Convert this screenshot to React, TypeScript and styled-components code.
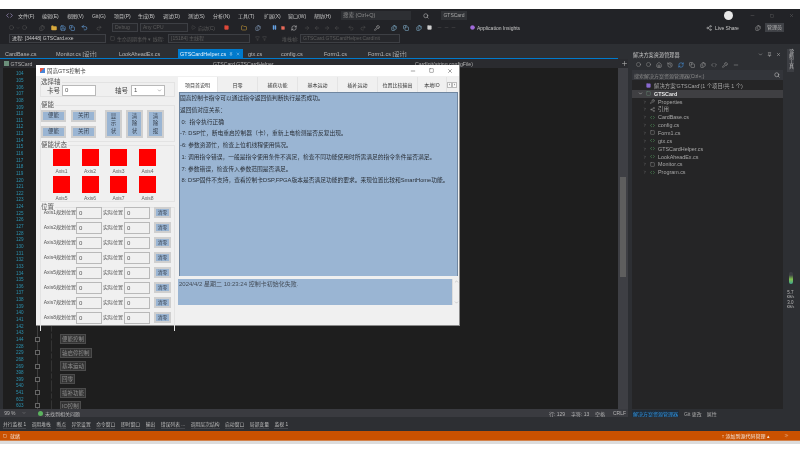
import React from 'react';
import styled, { createGlobalStyle } from 'styled-components';
import {
  ArrowLeft, ArrowRight, ChevronDown, ChevronRight, ChevronsRight, Circle, Code, Copy, Files, Filter, Folder,
  History, Home, Minus, Pause, Pin, Play, Plus, RefreshCw, Redo2, Save, Search, Share2, Square, Undo2, Wrench, X,
} from 'lucide-react';

const FONT = '"Liberation Sans", "Noto Sans CJK SC", sans-serif';

const GlobalStyle = createGlobalStyle`
  html, body { margin: 0; padding: 0; background: #fff; overflow: hidden; }
  * { box-sizing: border-box; }
  body { font-family: ${FONT}; }
`;

const Page = styled.div`
  position: relative;
  width: 800px;
  height: 453px;
  background: #fff;
  filter: blur(0.4px);
  overflow: hidden;
`;

const Ide = styled.div`
  margin-top: 9px;
  height: 432px;
  background: #2d2f33;
  display: flex;
  flex-direction: column;
  color: #c4c4c4;
  font-size: 6px;
`;

const BarRow = styled.div<{ $h: number; $bg?: string }>`
  height: ${(p) => p.$h}px;
  flex: none;
  display: flex;
  align-items: center;
  background: ${(p) => p.$bg || '#222327'};
  white-space: nowrap;
`;

const Slot = styled.div<{ $w: number; $color?: string; $center?: boolean; $small?: boolean }>`
  width: ${(p) => p.$w}px;
  flex: none;
  display: flex;
  align-items: center;
  justify-content: ${(p) => (p.$center ? 'center' : 'flex-start')};
  gap: 2px;
  color: ${(p) => p.$color || 'inherit'};
  font-size: ${(p) => (p.$small ? '5px' : 'inherit')};
`;

const SearchBox = styled.div`
  width: 70px;
  height: 9px;
  background: #2d2f33;
  color: #8d8d8d;
  padding-left: 2px;
  line-height: 9px;
  flex: none;
  font-size: 5.5px;
`;

const TitleTag = styled.div`
  width: 26px;
  height: 9px;
  background: #303236;
  color: #a9a9a9;
  line-height: 9px;
  text-align: center;
  font-size: 5px;
  flex: none;
`;

const Avatar = styled.div`
  width: 9px;
  height: 9px;
  border-radius: 50%;
  background: #e8e8e8;
  flex: none;
`;

const ComboBox = styled.div<{ $w: number; $dim?: boolean }>`
  width: ${(p) => p.$w}px;
  height: 9px;
  flex: none;
  border: 1px solid #3d3f44;
  background: #26272b;
  color: ${(p) => (p.$dim ? '#5c5c5c' : '#c8c8c8')};
  font-size: 5px;
  line-height: 7px;
  padding-left: 2px;
  overflow: hidden;
`;

const AdminButton = styled.div`
  width: 19px;
  height: 9px;
  background: #3f4146;
  color: #b5b5b5;
  font-size: 5px;
  line-height: 9px;
  text-align: center;
  flex: none;
`;

const DocRow = styled.div`
  display: flex;
  height: 10px;
  margin-top: 5px;
  flex: none;
`;

const DocTabs = styled.div`
  width: 618px;
  display: flex;
  border-bottom: 1px solid #007acc;
  flex: none;
`;

const DocTab = styled.div<{ $w: number; $active?: boolean }>`
  width: ${(p) => p.$w}px;
  flex: none;
  display: flex;
  align-items: center;
  gap: 3px;
  padding-left: ${(p) => (p.$active ? 2 : 5)}px;
  background: ${(p) => (p.$active ? '#007acc' : 'transparent')};
  color: ${(p) => (p.$active ? '#e8f3fb' : '#b8b8b8')};
  font-size: 5.5px;
  white-space: nowrap;
`;

const PanelTitle = styled.div`
  margin-left: 14px;
  width: 151px;
  flex: none;
  display: flex;
  align-items: center;
  gap: 4px;
  padding-left: 1px;
  font-size: 5.2px;
  color: #c4c4c4;
`;

const PanelIcons = styled.span`
  margin-left: auto;
  display: flex;
  align-items: center;
  gap: 4px;
  padding-right: 2px;
`;

const Workspace = styled.div`
  flex: 1;
  min-height: 0;
  display: flex;
`;

const EditorColumn = styled.div`
  width: 628px;
  flex: none;
  display: flex;
  flex-direction: column;
`;

const EditorHead = styled.div`
  height: 9px;
  flex: none;
  display: flex;
  align-items: center;
  padding-left: 4px;
  background: #2a2b2f;
  color: #b0b0b0;
  font-size: 5.2px;
`;

const HeadIcon = styled.span`
  width: 5px;
  height: 5px;
  background: #6b8f7a;
  flex: none;
`;

const EditorBody = styled.div`
  flex: 1;
  min-height: 0;
  display: flex;
`;

const Gutter = styled.div`
  width: 618px;
  padding-left: 5px;
  padding-top: 2.5px;
  background: #1e1e1e;
  overflow: hidden;
  display: flex;
  flex-direction: column;
  border-left: 3px solid #2d2f33;
`;

const CodeLine = styled.div`
  height: 6.65px;
  flex: none;
  display: flex;
  align-items: center;
`;

const LineNumber = styled.span`
  width: 20px;
  flex: none;
  padding-left: 8px;
  color: #2b91af;
  font-size: 4.6px;
`;

const FoldSlot = styled.span`
  width: 24px;
  height: 100%;
  flex: none;
  display: flex;
  align-items: center;
  position: relative;

  &::before {
    content: '';
    position: absolute;
    left: 9px;
    top: 0;
    bottom: 0;
    border-left: 1px solid #3e3e3e;
  }

  &::after {
    content: '';
    position: absolute;
    left: 23px;
    top: 0;
    bottom: 0;
    border-left: 1px dashed #343434;
  }
`;

const FoldBox = styled.span`
  margin-left: 7px;
  width: 5px;
  height: 5px;
  border: 1px solid #666;
  background: #1e1e1e;
  position: relative;
  z-index: 1;
`;

const RegionBox = styled.span`
  margin-left: 8px;
  background: #343434;
  border: 1px solid #4c4c4c;
  color: #8e8e8e;
  padding: 0 1px;
  font-size: 5.5px;
  line-height: 8px;
  white-space: nowrap;
`;

const ScrollTrack = styled.div`
  width: 10px;
  flex: none;
  background: #3e3f44;
  display: flex;
  flex-direction: column;
  align-items: center;
  padding-top: 109px;
`;

const ScrollThumb = styled.div`
  width: 6px;
  height: 100px;
  background: #5e5e5e;
`;

const EditorStatus = styled.div`
  height: 8px;
  flex: none;
  display: flex;
  align-items: center;
  background: #3a3b40;
  color: #b4b4b4;
  font-size: 5px;
  white-space: nowrap;
`;

const GreenDot = styled.span`
  width: 5px;
  height: 5px;
  border-radius: 50%;
  background: #5bb35e;
  flex: none;
`;

const SidePanel = styled.div`
  margin-left: 4px;
  width: 151px;
  flex: none;
  display: flex;
  flex-direction: column;
  background: #252526;
`;

const SideTools = styled.div`
  height: 11px;
  flex: none;
  background: #2d2f33;
  display: flex;
  align-items: center;
  gap: 5px;
  padding-left: 4px;
  color: #a0a0a0;
`;

const SideSearch = styled.div`
  height: 10px;
  flex: none;
  margin-bottom: 2px;
  background: #33353a;
  color: #8a8a8a;
  font-size: 5px;
  display: flex;
  align-items: center;
  justify-content: space-between;
  padding: 0 3px 0 2px;
`;

const TreeRow = styled.div<{ $selected?: boolean; $indent: number }>`
  height: 7.85px;
  flex: none;
  display: flex;
  align-items: center;
  gap: 3px;
  padding-left: ${(p) => p.$indent}px;
  background: ${(p) => (p.$selected ? '#3f3f42' : 'transparent')};
  color: ${(p) => (p.$selected ? '#e6e6e6' : '#a8a8a8')};
  font-size: 5.4px;
  font-weight: ${(p) => (p.$selected ? 700 : 400)};
  white-space: nowrap;
`;

const TreeSpacer = styled.span`
  width: 5px;
  flex: none;
`;

const SideFiller = styled.div`
  flex: 1;
`;

const SideStatus = styled.div`
  height: 8px;
  flex: none;
  display: flex;
  align-items: center;
  gap: 5px;
  background: #2d2f33;
  font-size: 5px;
  color: #a8a8a8;
`;

const ActiveSideTab = styled.span`
  color: #2f93e0;
  background: #1f2b38;
  padding: 0 1px;
`;

const Rail = styled.div`
  margin-left: 2px;
  flex: 1;
  display: flex;
  flex-direction: column;
  align-items: center;
  font-size: 4.5px;
  color: #b8b8b8;
  margin-top: -10px;
`;

const RailTitle = styled.div`
  writing-mode: vertical-rl;
  height: 23px;
  background: #3c3e43;
  line-height: 7px;
  margin-right: 4px;
  font-size: 5px;
`;

const Gauge = styled.div`
  margin-top: 200px;
  width: 4px;
  height: 12px;
  background: linear-gradient(#3c3e43 25%, #7fc050 60%, #3ea58e);
  border-radius: 2px;
  margin-right: 4px;
`;

const RailStat = styled.div<{ $first?: boolean }>`
  margin-top: ${(p) => (p.$first ? 6 : 1)}px;
  margin-right: 4px;
  line-height: 5px;
  text-align: center;
  white-space: nowrap;
`;

const RailUnit = styled.div`
  font-size: 3.5px;
  line-height: 4px;
`;

const ToolTabs = styled.div`
  height: 14px;
  flex: none;
  display: flex;
  align-items: center;
  gap: 5.5px;
  padding-left: 3px;
  font-size: 4.8px;
  color: #bdbdbd;
  background: #2d2f33;
`;

const ToolTab = styled.span`
  padding-bottom: 1px;
  border-bottom: 1px solid #44464b;
  white-space: nowrap;
`;

const StatusBar = styled.div`
  height: 10px;
  flex: none;
  display: flex;
  align-items: center;
  justify-content: space-between;
  background: #ca5100;
  color: #f3e3d6;
  font-size: 5px;
  padding: 0 11px 0 3px;
  border-bottom: 1px solid #d4824a;
`;

const StatusGroup = styled.span`
  display: flex;
  align-items: center;
  gap: 3px;
`;

const StatusIcon = styled(ChevronsRight)`
  margin-left: 11px;
`;

const FootStrip = styled.div`
  height: 3px;
  background: #dcdcdc;
`;

const Dialog = styled.div`
  position: absolute;
  left: 36px;
  top: 65px;
  width: 424px;
  height: 261px;
  background: #f0f0f0;
  color: #333;
  font-size: 6.5px;
  display: flex;
  flex-direction: column;
  border-right: 1px solid #8a8a8a;
  border-bottom: 1px solid #8a8a8a;
`;

const DialogTitle = styled.div`
  height: 11px;
  flex: none;
  background: #fff;
  display: flex;
  align-items: center;
  padding-left: 4px;
  gap: 2px;
  font-size: 5.5px;
  color: #444;
`;

const AppIcon = styled.span`
  width: 5px;
  height: 5px;
  background: linear-gradient(135deg, #e05a4a 50%, #4a86d8 50%);
  flex: none;
`;

const WindowButtons = styled.div`
  margin-left: auto;
  display: flex;
  align-items: center;
  gap: 13px;
  padding-right: 6px;
  color: #444;
`;

const DialogBody = styled.div`
  flex: 1;
  min-height: 0;
  display: flex;
`;

const LeftPane = styled.div`
  width: 141px;
  flex: none;
  padding: 2px 2px 0 4px;
  display: flex;
  flex-direction: column;
`;

const Group = styled.div<{ $h: number; $mt: number; $open?: boolean }>`
  height: ${(p) => p.$h}px;
  margin-top: ${(p) => p.$mt}px;
  flex: none;
  border: 1px solid #e3e3e3;
  border-bottom-width: ${(p) => (p.$open ? 0 : 1)}px;
`;

const Legend = styled.div`
  margin: -5px 0 0 0;
  height: 8px;
  line-height: 8px;
  width: fit-content;
  padding-right: 1px;
  background: #f0f0f0;
  font-size: 6.5px;
  color: #555;
`;

const AxisRow = styled.div`
  display: flex;
  align-items: center;
  height: 10px;
  margin-top: -1px;
  padding-left: 6px;
  font-size: 6.5px;
  color: #444;
`;

const AxisLabel = styled.span<{ $ml?: number }>`
  width: 15px;
  margin-left: ${(p) => p.$ml || 0}px;
  flex: none;
`;

const Field = styled.div<{ $w: number; $h?: number; $ml?: number; $readonly?: boolean }>`
  width: ${(p) => p.$w}px;
  height: ${(p) => p.$h || 11}px;
  margin-left: ${(p) => p.$ml || 0}px;
  flex: none;
  display: flex;
  align-items: center;
  justify-content: space-between;
  padding: 0 2px;
  background: ${(p) => (p.$readonly ? '#f0f0f0' : '#fff')};
  border: 1px solid #b9b9b9;
  color: #555;
  font-size: 6px;
`;

const EnableArea = styled.div`
  display: flex;
  padding: 1px 0 0 0;
`;

const SmallButtons = styled.div`
  width: 64px;
  flex: none;
  display: grid;
  grid-template-columns: 25px 25px;
  grid-auto-rows: 12px;
  column-gap: 5px;
  row-gap: 4px;
`;

const BlueButton = styled.div`
  background: #9ab5d3;
  border: 2px solid #cfcfcf;
  color: #3c4654;
  display: flex;
  align-items: center;
  justify-content: center;
  font-size: 5.5px;
  text-align: center;
  line-height: 7.5px;
`;

const TallButtons = styled.div`
  display: grid;
  grid-template-columns: repeat(3, 17px);
  column-gap: 4px;
  height: 28px;
`;

const LedGrid = styled.div`
  display: grid;
  grid-template-columns: 29px 28px 29px 29px;
  padding: 0 0 0 6px;
`;

const LedCell = styled.div`
  height: 27px;
  display: flex;
  flex-direction: column;
  align-items: center;
  font-size: 5px;
  color: #666;
  line-height: 10px;
`;

const Led = styled.div`
  width: 17px;
  height: 17px;
  background: #f00;
  flex: none;
`;

const PosRow = styled.div`
  height: 15px;
  display: flex;
  align-items: flex-start;
  font-size: 5px;
  color: #555;
`;

const PosLabel = styled.span<{ $w: number }>`
  width: ${(p) => p.$w}px;
  flex: none;
  line-height: 10px;
  white-space: nowrap;
  text-align: right;
`;

const ZeroButton = styled(BlueButton)`
  width: 17px;
  height: 11px;
  margin-left: 4px;
  flex: none;
  font-size: 4.6px;
`;

const PosList = styled.div`
  margin-top: -4px;
`;

const RightPane = styled.div`
  flex: 1;
  min-width: 0;
  padding: 1px 1px 0 1px;
  display: flex;
  flex-direction: column;
`;

const TabStrip = styled.div`
  height: 15px;
  flex: none;
  display: flex;
  align-items: stretch;
`;

const PageTab = styled.div<{ $active?: boolean; $w: number }>`
  width: ${(p) => p.$w}px;
  flex: none;
  display: flex;
  align-items: center;
  justify-content: center;
  background: ${(p) => (p.$active ? '#fff' : '#f0f0f0')};
  border-right: 1px solid #e4e4e4;
  font-size: 5px;
  color: #333;
  white-space: nowrap;
`;

const TabArrow = styled.div`
  width: 5px;
  height: 6px;
  margin: 5px 0 0 0;
  background: #fafafa;
  border: 1px solid #bbb;
  color: #333;
  font-size: 4px;
  line-height: 4px;
  text-align: center;
  flex: none;
`;

const InfoBox = styled.div`
  height: 184px;
  flex: none;
  margin: 0 0 0 1px;
  width: 279px;
  background: #9ab5d3;
  border: 1px solid #6f86a0;
  border-width: 1px 1px 0 1px;
  font-size: 5.75px;
  color: #2a3038;
`;

const InfoLine = styled.div`
  height: 11.75px;
  line-height: 11.75px;
  white-space: pre;
`;

const LogBox = styled.div`
  margin-top: 3px;
  height: 26px;
  width: 281px;
  flex: none;
  display: flex;
  background: #9ab5d3;
  color: #444d58;
  font-size: 6px;
  padding-left: 1px;
  line-height: 11px;
`;

const LogText = styled.div`
  flex: 1;
`;

const LogScroll = styled.div`
  width: 7px;
  flex: none;
  background: #f0f0f0;
  border-left: 1px solid #ddd;
  color: #999;
  display: flex;
  flex-direction: column;
  justify-content: space-between;
  align-items: center;
`;

const FlippedChevron = styled(ChevronDown)`
  transform: rotate(180deg);
`;

const menus: [string, number][] = [
  ['文件(F)', 24], ['编辑(E)', 25], ['视图(V)', 25], ['Git(G)', 22], ['项目(P)', 24], ['生成(B)', 25],
  ['调试(D)', 25], ['测试(S)', 25], ['分析(N)', 25], ['工具(T)', 26], ['扩展(X)', 24], ['窗口(W)', 26], ['帮助(H)', 26],
];

const docTabs: [string, number][] = [
  ['CardBase.cs', 51], ['Monitor.cs [设计]', 63], ['LookAheadEx.cs', 64], ['GTSCardHelper.cs', 65],
  ['gtx.cs', 33], ['config.cs', 43], ['Form1.cs', 44], ['Form1.cs [设计]', 60],
];

const files: [string, React.ReactNode][] = [
  ['Properties', <Wrench key="p" size={5} color="#b0b0b0" />],
  ['引用', <Share2 key="r" size={5} color="#9a9a9a" />],
  ['CardBase.cs', <Code key="c1" size={5} color="#5fb86a" />],
  ['config.cs', <Code key="c2" size={5} color="#5fb86a" />],
  ['Form1.cs', <Square key="f" size={5} color="#9a9a9a" />],
  ['gtx.cs', <Code key="c3" size={5} color="#5fb86a" />],
  ['GTSCardHelper.cs', <Code key="c4" size={5} color="#5fb86a" />],
  ['LookAheadEx.cs', <Code key="c5" size={5} color="#5fb86a" />],
  ['Monitor.cs', <Square key="m" size={5} color="#9a9a9a" />],
  ['Program.cs', <Code key="c6" size={5} color="#5fb86a" />],
];

const tailNumbers = [228, 229, 268, 269, 398, 399, 540, 541, 602, 603];
const regions: Record<number, string> = {
  144: '便能控制', 229: '轴启停控制', 269: '基本运动', 399: '回零', 541: '插补功能', 603: 'IO控制',
};
const lineNumbers = [...Array.from({ length: 41 }, (_, i) => 104 + i), ...tailNumbers];

const toolTabs = [
  '并行监视 1', '调用堆栈', '断点', '异常设置', '命令窗口', '即时窗口', '输出', '错误列表 ...', '调用层次结构', '启动窗口', '局部变量', '监视 1',
];

const pageTabs: [string, number][] = [
  ['项目首说明', 40], ['日零', 40], ['捕获功能', 40], ['基本运动', 40], ['插补运动', 40], ['位置比较输出', 40], ['本地IO', 29],
];

const infoLines = [
  '固高控制卡指令可以通过指令返回值判断执行是否成功。',
  '返回值对应关系：',
  ' 0:  指令执行正确',
  '-7: DSP忙，断电重启控制器（卡），重新上电检测是否反复出现。',
  '-6: 参数资源忙，检查上位机线程使用情况。',
  ' 1: 调用指令错误，一般是指令使用条件不满足，检查不同功能使用时所需满足的指令条件是否满足。',
  ' 7: 参数错误，检查传入参数范围是否满足。',
  ' 8: DSP固件不支持，查看控制卡DSP,FPGA版本是否满足功能的要求。来现位置比较和SmartHome功能。',
];

const axes = [1, 2, 3, 4, 5, 6, 7, 8];

export default function App() {
  return (
    <Page>
      <GlobalStyle />
      <Ide>
        <BarRow $h={13}>
          <Slot $w={18} $color="#b9a7e0" $center><Code size={7} /></Slot>
          {menus.map(([label, w]) => (
            <Slot key={label} $w={w} $small>{label}</Slot>
          ))}
          <Slot $w={1} />
          <SearchBox>搜索 (Ctrl+Q)</SearchBox>
          <Slot $w={12} />
          <Slot $w={18} $color="#c8c8c8"><Search size={6} /></Slot>
          <TitleTag>GTSCard</TitleTag>
          <Slot $w={257} />
          <Avatar />
          <Slot $w={17} $center />
          <Slot $w={20} $color="#666"><Minus size={5} /></Slot>
          <Slot $w={19} $color="#666"><Square size={4} /></Slot>
          <Slot $w={8} $color="#666"><X size={5} /></Slot>
        </BarRow>
        <BarRow $h={11}>
          <Slot $w={9} />
          <Slot $w={30} $color="#5a5a5a"><Circle size={5} /><ChevronDown size={4} /><Circle size={5} /></Slot>
          <Slot $w={12} $color="#5a5a5a"><Files size={6} /></Slot>
          <Slot $w={9} $color="#d8a93d"><Folder size={6} fill="#d8a93d" /></Slot>
          <Slot $w={9} $color="#6aa8e8"><Save size={6} /></Slot>
          <Slot $w={12} $color="#6aa8e8"><Copy size={6} /></Slot>
          <Slot $w={15} $color="#6aa8e8"><Undo2 size={7} /></Slot>
          <Slot $w={16} $color="#5a5a5a"><Redo2 size={6} /></Slot>
          <ComboBox $w={26} $dim>Debug</ComboBox>
          <Slot $w={2} />
          <ComboBox $w={48} $dim>Any CPU</ComboBox>
          <Slot $w={3} />
          <Slot $w={33} $color="#5a5a5a" $small><Play size={5} />启动(C)</Slot>
          <Slot $w={8} $color="#e04a3a"><Square size={5} fill="#e04a3a" /></Slot>
          <Slot $w={9} />
          <Slot $w={14} $color="#d8a93d"><Folder size={6} /></Slot>
          <Slot $w={17} $color="#8fa8c8"><Files size={6} /></Slot>
          <Slot $w={9} $color="#6aa8e8"><Pause size={5} fill="#6aa8e8" /></Slot>
          <Slot $w={10} $color="#e86a5a"><Square size={4} fill="#e86a5a" /></Slot>
          <Slot $w={13} $color="#d0d0d0"><RefreshCw size={6} /></Slot>
          <Slot $w={10} $color="#555"><ArrowRight size={6} /></Slot>
          <Slot $w={10} $color="#555"><ArrowLeft size={6} /></Slot>
          <Slot $w={10} $color="#555"><ArrowRight size={6} /></Slot>
          <Slot $w={14} $color="#555"><ArrowLeft size={6} /></Slot>
          <Slot $w={12} $color="#555"><Undo2 size={6} /></Slot>
          <Slot $w={14} $color="#555"><Redo2 size={6} /></Slot>
          <Slot $w={17} $color="#c0c0c0"><Wrench size={6} /></Slot>
          <Slot $w={12} $color="#8ec0e0"><Files size={6} /></Slot>
          <Slot $w={13} $color="#8ec0e0"><Copy size={6} /></Slot>
          <Slot $w={11} $color="#8ec0e0"><Files size={6} /></Slot>
          <Slot $w={10} $color="#d0d0d0"><Square size={5} fill="#d0d0d0" /></Slot>
          <Slot $w={33} $color="#555"><Minus size={5} /><Minus size={5} /><Minus size={5} /></Slot>
          <Slot $w={7} $color="#a06ad8"><Circle size={5} fill="#a06ad8" /></Slot>
          <Slot $w={64} $color="#c8c8c8" $small>Application Insights</Slot>
          <Slot $w={165} />
          <Slot $w={9} $color="#c0c0c0"><Share2 size={6} /></Slot>
          <Slot $w={40} $color="#c8c8c8" $small>Live Share</Slot>
          <Slot $w={10} $color="#a0a0a0"><Files size={6} /></Slot>
          <AdminButton>管理员</AdminButton>
        </BarRow>
        <BarRow $h={11}>
          <Slot $w={9} />
          <ComboBox $w={97}>进程:  [34448] GTSCard.exe</ComboBox>
          <Slot $w={4} />
          <Slot $w={7} $color="#5a5a5a"><Square size={5} /></Slot>
          <Slot $w={51} $color="#5a5a5a" $small>生命周期事件 ▾ 线程:</Slot>
          <ComboBox $w={82} $dim>[15184] 主线程</ComboBox>
          <Slot $w={5} />
          <Slot $w={27} $color="#5a5a5a"><Filter size={5} /><Filter size={5} /></Slot>
          <Slot $w={18} $color="#5a5a5a" $small>堆栈帧:</Slot>
          <ComboBox $w={100} $dim>GTSCard.GTSCardHelper.CardInit</ComboBox>
        </BarRow>
        <DocRow>
          <DocTabs>
            {docTabs.map(([label, w], i) => (
              <DocTab key={label} $w={w} $active={i === 3}>
                {label}
                {i === 3 && <Pin size={4} />}
                {i === 3 && <X size={4} />}
              </DocTab>
            ))}
          </DocTabs>
          <PanelTitle>
            解决方案资源管理器
            <PanelIcons>
              <ChevronDown size={5} />
              <Pin size={5} />
              <X size={5} />
            </PanelIcons>
          </PanelTitle>
        </DocRow>
        <Workspace>
          <EditorColumn>
            <EditorHead>
              <HeadIcon />
              <Slot $w={204}>&nbsp;GTSCard</Slot>
              <Slot $w={202}>GTSCard.GTSCardHelper</Slot>
              <Slot $w={204}>CardInit(string configFile)</Slot>
              <Slot $w={10} $center><Plus size={7} /></Slot>
            </EditorHead>
            <EditorBody>
              <Gutter>
                {lineNumbers.map((n, i) => (
                  <CodeLine key={i}>
                    <LineNumber>{n}</LineNumber>
                    <FoldSlot>{regions[n] && <FoldBox />}</FoldSlot>
                    {regions[n] && <RegionBox>{regions[n]}</RegionBox>}
                  </CodeLine>
                ))}
              </Gutter>
              <ScrollTrack><ScrollThumb /></ScrollTrack>
            </EditorBody>
            <EditorStatus>
              <Slot $w={22}>&nbsp;&nbsp;&nbsp;99 %</Slot>
              <Slot $w={16}><ChevronDown size={4} /></Slot>
              <GreenDot />
              <Slot $w={2} />
              <Slot $w={66}>未找到相关问题</Slot>
              <Slot $w={438} />
              <Slot $w={22}>行: 129</Slot>
              <Slot $w={24}>字符: 13</Slot>
              <Slot $w={18}>空格</Slot>
              <Slot $w={15}>CRLF</Slot>
            </EditorStatus>
          </EditorColumn>
          <SidePanel>
            <SideTools>
              <Circle size={5} /><Circle size={5} /><Home size={6} /><History size={6} /><RefreshCw size={6} color="#4a9ae8" />
              <Copy size={6} /><Files size={6} /><Code size={6} /><Wrench size={6} /><Minus size={6} />
            </SideTools>
            <SideSearch>
              搜索解决方案资源管理器(Ctrl+;)
              <Search size={6} color="#ccc" />
            </SideSearch>
            <TreeRow $indent={6}>
              <TreeSpacer />
              <Square size={5} color="#8a6ad0" fill="#8a6ad0" />
              解决方案'GTSCard'(1 个项目/共 1 个)
            </TreeRow>
            <TreeRow $indent={6} $selected>
              <ChevronDown size={5} />
              <Square size={5} color="#6b8f7a" />
              GTSCard
            </TreeRow>
            {files.map(([name, icon]) => (
              <TreeRow key={name} $indent={11}>
                <ChevronRight size={4} />
                {icon}
                {name}
              </TreeRow>
            ))}
            <SideFiller />
            <SideStatus>
              <ActiveSideTab>解决方案资源管理器</ActiveSideTab>
              <span>Git 更改</span>
              <span>属性</span>
            </SideStatus>
          </SidePanel>
          <Rail>
            <RailTitle>诊断工具</RailTitle>
            <Gauge />
            <RailStat $first>5.7<RailUnit>KB/s</RailUnit></RailStat>
            <RailStat>3.0<RailUnit>KB/s</RailUnit></RailStat>
          </Rail>
        </Workspace>
        <ToolTabs>
          {toolTabs.map((t) => (
            <ToolTab key={t}>{t}</ToolTab>
          ))}
        </ToolTabs>
        <StatusBar>
          <StatusGroup><Square size={4} />就绪</StatusGroup>
          <StatusGroup>
            ↑ 添加到源代码管理 ▴
            <StatusIcon size={5} />
          </StatusGroup>
        </StatusBar>
      </Ide>
      <FootStrip />

      <Dialog>
        <DialogTitle>
          <AppIcon />
          固高GTS控制卡
          <WindowButtons>
            <Minus size={6} />
            <Square size={5} />
            <X size={6} />
          </WindowButtons>
        </DialogTitle>
        <DialogBody>
          <LeftPane>
            <Group $h={15} $mt={4}>
              <Legend>选择轴</Legend>
              <AxisRow>
                <AxisLabel>卡号</AxisLabel>
                <Field $w={34}>0</Field>
                <AxisLabel $ml={19}>轴号</AxisLabel>
                <Field $w={34} $ml={1}>1<ChevronDown size={5} /></Field>
              </AxisRow>
            </Group>
            <Group $h={37} $mt={8}>
              <Legend>便能</Legend>
              <EnableArea>
                <SmallButtons>
                  <BlueButton>便能</BlueButton>
                  <BlueButton>关闭</BlueButton>
                  <BlueButton>便能</BlueButton>
                  <BlueButton>关闭</BlueButton>
                </SmallButtons>
                <TallButtons>
                  <BlueButton>显<br />示<br />状</BlueButton>
                  <BlueButton>清<br />除<br />状</BlueButton>
                  <BlueButton>清<br />除<br />报</BlueButton>
                </TallButtons>
              </EnableArea>
            </Group>
            <Group $h={57} $mt={3}>
              <Legend>便能状态</Legend>
              <LedGrid>
                {axes.map((n) => (
                  <LedCell key={n}>
                    <Led />
                    Axis{n}
                  </LedCell>
                ))}
              </LedGrid>
            </Group>
            <Group $h={124} $mt={5} $open>
              <Legend>位置</Legend>
              <PosList>
                {axes.map((n) => (
                  <PosRow key={n}>
                    <PosLabel $w={35}>Axis{n}规划位置</PosLabel>
                    <Field $w={26} $h={12} $readonly>0</Field>
                    <PosLabel $w={21}>实际位置</PosLabel>
                    <Field $w={26} $h={12} $ml={1} $readonly>0</Field>
                    <ZeroButton>清零</ZeroButton>
                  </PosRow>
                ))}
              </PosList>
            </Group>
          </LeftPane>
          <RightPane>
            <TabStrip>
              {pageTabs.map(([label, w], i) => (
                <PageTab key={label} $w={w} $active={i === 0}>{label}</PageTab>
              ))}
              <TabArrow>‹</TabArrow>
              <TabArrow>›</TabArrow>
            </TabStrip>
            <InfoBox>
              {infoLines.map((line) => (
                <InfoLine key={line}>{line}</InfoLine>
              ))}
            </InfoBox>
            <LogBox>
              <LogText>2024/4/2 星期二 10:23:24 控制卡初始化失败.</LogText>
              <LogScroll>
                <FlippedChevron size={5} />
                <ChevronDown size={5} />
              </LogScroll>
            </LogBox>
          </RightPane>
        </DialogBody>
      </Dialog>
    </Page>
  );
}
